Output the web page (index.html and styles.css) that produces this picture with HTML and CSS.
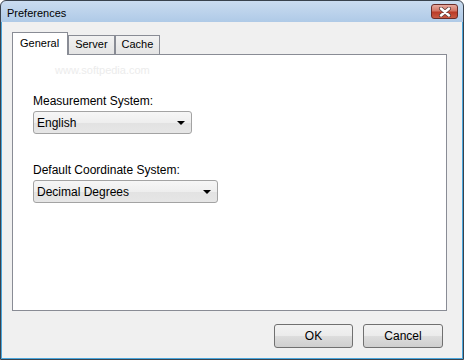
FILE: index.html
```html
<!DOCTYPE html>
<html lang="en">
<head>
  <meta charset="UTF-8">
  <title>Preferences</title>
  <link rel="stylesheet" href="styles.css">
</head>
<body>
  <div class="window">
    <div class="titlebar">
      <span class="title">Preferences</span>
      <button class="close" aria-label="Close">
        <svg width="14" height="10" viewBox="0 0 14 10">
          <path d="M3 1.5 L11 8.5 M11 1.5 L3 8.5" stroke="#5a3a38" stroke-width="4" stroke-linecap="round"/>
          <path d="M3 1.5 L11 8.5 M11 1.5 L3 8.5" stroke="#ffffff" stroke-width="2.4" stroke-linecap="round"/>
        </svg>
      </button>
    </div>

    <div class="content">
      <div class="tabs">
        <div class="tab active">General</div>
        <div class="tab">Server</div>
        <div class="tab">Cache</div>
      </div>

      <div class="panel">
        <span class="watermark">www.softpedia.com</span>

        <div class="field">
          <label>Measurement System:</label>
          <div class="combo combo-short">
            <span>English</span>
            <span class="arrow"></span>
          </div>
        </div>

        <div class="field">
          <label>Default Coordinate System:</label>
          <div class="combo combo-long">
            <span>Decimal Degrees</span>
            <span class="arrow"></span>
          </div>
        </div>
      </div>

      <div class="actions">
        <button class="btn btn-ok">OK</button>
        <button class="btn btn-cancel">Cancel</button>
      </div>
    </div>
  </div>
</body>
</html>
```

FILE: styles.css
```css
:root {
  --frame: #39424d;
  --frame-blue: #4aa6dc;
  --face: #f0f0f0;
  --tab-border: #898c95;
  --text: #000000;
}

* {
  margin: 0;
  padding: 0;
  box-sizing: border-box;
}

body {
  font-family: "Liberation Sans", Arial, sans-serif;
  font-size: 12px;
  color: var(--text);
  background: #ffffff;
}

.window {
  width: 464px;
  height: 360px;
  display: flex;
  flex-direction: column;
  border: 1px solid var(--frame);
  border-radius: 6px 6px 0 0;
  background: linear-gradient(#cadcf0, #afcae7 21px, #afcae7);
}

.titlebar {
  height: 21px;
  display: flex;
  align-items: center;
  padding-left: 6px;
}

.title {
  font-size: 11px;
  padding-top: 2px;
}

.close {
  margin-left: auto;
  margin-right: 5px;
  align-self: flex-start;
  margin-top: 3px;
  width: 27px;
  height: 15px;
  display: flex;
  align-items: center;
  justify-content: center;
  border: 1px solid #6b2c28;
  border-radius: 3px;
  background: linear-gradient(#e7aa9f, #d27565 45%, #bb3b28 55%, #c85a44);
}

.content {
  flex: 1;
  background: var(--face);
  border: 1px solid var(--frame-blue);
  border-top: none;
  padding: 10px 0 0 10px;
  display: flex;
  flex-direction: column;
}

.tabs {
  height: 22px;
  display: flex;
  align-items: flex-end;
}

.tab {
  height: 19px;
  padding: 0 6px;
  font-size: 11px;
  line-height: 17px;
  border: 1px solid var(--tab-border);
  border-bottom: none;
  background: linear-gradient(#f2f2f2, #e4e4e4);
}

.tab.active {
  position: relative;
  z-index: 1;
  height: 23px;
  margin-bottom: -1px;
  padding: 0 8px 0 7px;
  line-height: 21px;
  background: #ffffff;
}

.panel {
  position: relative;
  width: 435px;
  height: 257px;
  border: 1px solid var(--tab-border);
  background: #ffffff;
  padding: 39px 0 0 20px;
  display: flex;
  flex-direction: column;
  gap: 29px;
}

.watermark {
  position: absolute;
  left: 42px;
  top: 9px;
  font-size: 11px;
  color: #ececec;
}

.field {
  display: flex;
  flex-direction: column;
  gap: 2px;
}

.field label {
  line-height: 15px;
}

.combo {
  height: 23px;
  display: flex;
  align-items: center;
  justify-content: space-between;
  padding: 0 6px 0 3px;
  border: 1px solid #a3a3a3;
  border-radius: 3px;
  background: linear-gradient(#f6f6f6, #eeeeee 50%, #e2e2e2 50%, #e6e6e6);
}

.combo-short {
  width: 159px;
}

.combo-long {
  width: 185px;
}

.arrow {
  width: 0;
  height: 0;
  border-left: 4px solid transparent;
  border-right: 4px solid transparent;
  border-top: 4px solid #000000;
}

.actions {
  display: flex;
  justify-content: flex-end;
  gap: 10px;
  margin-top: 13px;
  padding-right: 19px;
}

.btn {
  height: 24px;
  font-family: inherit;
  font-size: 12px;
  color: var(--text);
  border: 1px solid #707070;
  border-radius: 3px;
  background: linear-gradient(#f2f2f2, #ebebeb 50%, #dddddd 50%, #cfcfcf);
}

.btn-ok {
  width: 79px;
}

.btn-cancel {
  width: 80px;
}
```
